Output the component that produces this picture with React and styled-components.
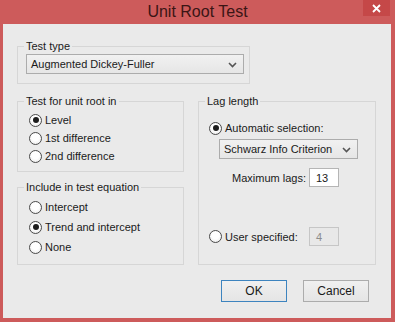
import React from 'react'
import styled, { createGlobalStyle } from 'styled-components'

const Global = createGlobalStyle`
  html, body {
    margin: 0;
    padding: 0;
    background: #cd5b5b;
  }
  * { box-sizing: border-box; }
`

const Frame = styled.div`
  width: 395px;
  height: 322px;
  background: #cd5b5b;
  display: flex;
  flex-direction: column;
  font-family: "Liberation Sans", Arial, sans-serif;
  font-size: 11px;
  color: #1a1a1a;
`

const TitleBar = styled.div`
  position: relative;
  height: 24px;
  display: flex;
  align-items: center;
  justify-content: center;
`

const Title = styled.span`
  font-size: 16px;
  color: #3a1515;
  margin-top: -1px;
`

const CloseBtn = styled.div`
  position: absolute;
  top: 0;
  right: 5px;
  width: 27px;
  height: 16px;
  background: #c54848;
  display: flex;
  align-items: center;
  justify-content: center;
`

const Client = styled.div`
  flex: 1;
  margin: 0 4px 4px 3px;
  background: #eaeaea;
  padding: 15px 16px 0 14px;
  display: flex;
  flex-direction: column;
`

const Group = styled.fieldset`
  margin: 0;
  border: 1px solid #d6d6d6;
  padding: ${p => p.pad || '0 5px 9px 8px'};
  min-width: 0;
  display: flex;
  flex-direction: column;
`

const Legend = styled.legend`
  padding: 0 2px;
  margin-left: -2px;
  line-height: 14px;
  height: 14px;
`

const TypeGroup = styled(Group)`
  width: 233px;
`

const Columns = styled.div`
  display: grid;
  grid-template-columns: 167px 178px;
  column-gap: 14px;
  margin-top: 10px;
`

const LeftCol = styled.div`
  display: flex;
  flex-direction: column;
  gap: 8px;
`

const Select = styled.div`
  position: relative;
  width: ${p => p.w}px;
  height: 20px;
  margin-top: ${p => p.top || 0}px;
  margin-left: ${p => p.left || 0}px;
  border: 1px solid #acacac;
  background: linear-gradient(#f1f1f1, #e6e6e6);
  display: flex;
  align-items: center;
  padding-left: 4px;
`

const Arrow = styled.svg`
  position: absolute;
  right: 6px;
  top: 7px;
`

const Row = styled.div`
  height: ${p => p.h || 18}px;
  display: flex;
  align-items: center;
`

const Circle = styled.span`
  width: 13px;
  height: 13px;
  border-radius: 50%;
  border: 1px solid #4a4a4a;
  background: radial-gradient(circle at 50% 40%, #ffffff 40%, #e4e4e4 100%);
  display: flex;
  align-items: center;
  justify-content: center;
  margin-right: 3px;
  flex: none;

  &::after {
    content: '';
    width: 6px;
    height: 6px;
    border-radius: 50%;
    background: #1c1c1c;
    display: ${p => (p.on ? 'block' : 'none')};
  }
`

const RadioList = styled.div`
  display: flex;
  flex-direction: column;
  padding-left: 3px;
  margin-top: 3px;
`

const Radio = ({ on, h, children }) => (
  <Row h={h}>
    <Circle on={on} />
    <span>{children}</span>
  </Row>
)

const LagBody = styled.div`
  display: flex;
  flex-direction: column;
  padding-left: 2px;
  margin-top: 11px;
`

const MaxRow = styled.div`
  display: flex;
  align-items: center;
  margin-top: 9px;
  padding-left: 23px;
`

const Field = styled.div`
  width: 30px;
  height: 19px;
  margin-left: auto;
  margin-right: 31px;
  border: 1px solid ${p => (p.off ? '#c6c6c6' : '#b5b5b5')};
  background: ${p => (p.off ? '#e8e8e8' : '#ffffff')};
  color: ${p => (p.off ? '#8c8c8c' : '#1a1a1a')};
  display: flex;
  align-items: center;
  padding-left: 6px;
`

const UserRow = styled.div`
  display: flex;
  align-items: center;
  margin-top: 40px;
`

const Buttons = styled.div`
  display: flex;
  justify-content: flex-end;
  gap: 16px;
  margin-top: 15px;
  padding-right: 6px;
`

const Button = styled.div`
  width: ${p => p.w}px;
  height: 22px;
  border: 1px solid ${p => (p.main ? '#3d84bf' : '#acacac')};
  background: linear-gradient(#f0f0f0, #e5e5e5);
  display: flex;
  align-items: center;
  justify-content: center;
  font-size: 12px;
`

const Chevron = () => (
  <Arrow width="9" height="6" viewBox="0 0 9 6">
    <path d="M1 1 L4.5 4.5 L8 1" fill="none" stroke="#555" strokeWidth="1.6" />
  </Arrow>
)

const App = () => {
  return (
    <>
      <Global />
      <Frame>
        <TitleBar>
          <Title>Unit Root Test</Title>
          <CloseBtn>
            <svg width="9" height="9" viewBox="0 0 9 9">
              <path d="M1 1 L8 8 M8 1 L1 8" stroke="#fff" strokeWidth="1.8" />
            </svg>
          </CloseBtn>
        </TitleBar>
        <Client>
          <TypeGroup>
            <Legend>Test type</Legend>
            <Select w={218} top={1}>
              Augmented Dickey-Fuller
              <Chevron />
            </Select>
          </TypeGroup>

          <Columns>
            <LeftCol>
              <Group pad="0 5px 6px 8px">
                <Legend>Test for unit root in</Legend>
                <RadioList>
                  <Radio on>Level</Radio>
                  <Radio>1st difference</Radio>
                  <Radio>2nd difference</Radio>
                </RadioList>
              </Group>
              <Group pad="0 5px 7px 8px">
                <Legend>Include in test equation</Legend>
                <RadioList>
                  <Radio h={20}>Intercept</Radio>
                  <Radio h={20} on>Trend and intercept</Radio>
                  <Radio h={20}>None</Radio>
                </RadioList>
              </Group>
            </LeftCol>

            <Group pad="0 5px 9px 8px">
              <Legend>Lag length</Legend>
              <LagBody>
                <Radio on>Automatic selection:</Radio>
                <Select w={139} top={2} left={10}>
                  Schwarz Info Criterion
                  <Chevron />
                </Select>
                <MaxRow>
                  Maximum lags:
                  <Field>13</Field>
                </MaxRow>
                <UserRow>
                  <Circle />
                  <span>User specified:</span>
                  <Field off>4</Field>
                </UserRow>
              </LagBody>
            </Group>
          </Columns>

          <Buttons>
            <Button main w={66}>OK</Button>
            <Button w={66}>Cancel</Button>
          </Buttons>
        </Client>
      </Frame>
    </>
  )
}

export default App
